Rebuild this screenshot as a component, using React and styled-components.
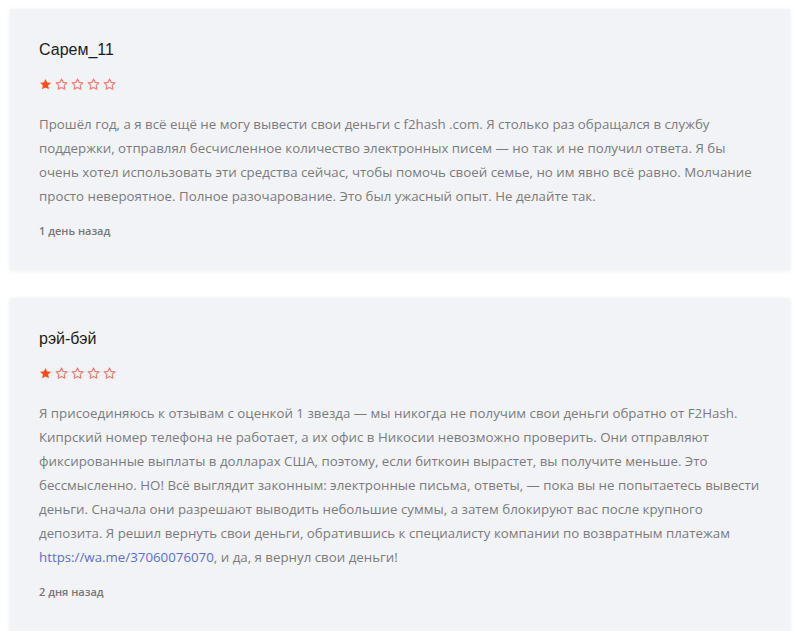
import styled, { createGlobalStyle } from 'styled-components';

const GlobalStyle = createGlobalStyle`
  html, body {
    margin: 0;
    padding: 0;
    background: #ffffff;
  }
  * { box-sizing: border-box; }
`;

const Page = styled.div`
  display: flex;
  flex-direction: column;
  gap: 28px;
  padding: 9px 5px 0 10px;
`;

const Card = styled.article`
  background: #f2f3f7;
  box-shadow: 0 1px 5px rgba(0, 0, 0, 0.07);
  padding: 30px 27px 31px 29px;
  display: flex;
  flex-direction: column;
`;

const Author = styled.h3`
  margin: 0;
  font-family: 'Liberation Sans', Arial, sans-serif;
  font-weight: 400;
  font-size: 16px;
  line-height: 22px;
  color: #1c1c1c;
`;

const Stars = styled.div`
  display: flex;
  gap: 3px;
  margin-top: 16px;
  height: 14px;
  align-items: center;
`;

const Body = styled.p`
  margin: 21px 0 0;
  font-family: 'Open Sans', sans-serif;
  font-size: 13.3px;
  line-height: 24px;
  color: #7b7b7b;
`;

const Link = styled.a`
  color: #5a6fd0;
  text-decoration: none;
`;

const When = styled.div`
  margin-top: 15px;
  font-family: 'Open Sans', sans-serif;
  font-size: 11px;
  font-weight: 600;
  line-height: 16px;
  color: #777777;
`;

function Star({ filled }) {
  const d =
    'M6.5 0.9l1.65 3.5 3.8.45-2.8 2.6.75 3.8L6.5 9.4l-3.4 1.85.75-3.8-2.8-2.6 3.8-.45z';
  return (
    <svg width="13" height="13" viewBox="0 0 13 13">
      {filled ? (
        <path d={d} fill="#ff4e1c" />
      ) : (
        <path d={d} fill="none" stroke="#f47a6c" strokeWidth="1.1" strokeLinejoin="round" />
      )}
    </svg>
  );
}

function Rating({ value }) {
  return (
    <Stars>
      {[1, 2, 3, 4, 5].map((i) => (
        <Star key={i} filled={i <= value} />
      ))}
    </Stars>
  );
}

export default function App() {
  return (
    <>
      <GlobalStyle />
      <Page>
        <Card>
          <Author>Сарем_11</Author>
          <Rating value={1} />
          <Body>
            Прошёл год, а я всё ещё не могу вывести свои деньги с f2hash .com. Я столько раз
            обращался в службу поддержки, отправлял бесчисленное количество электронных писем — но
            так и не получил ответа. Я бы очень хотел использовать эти средства сейчас, чтобы помочь
            своей семье, но им явно всё равно. Молчание просто невероятное. Полное разочарование.
            Это был ужасный опыт. Не делайте так.
          </Body>
          <When>1 день назад</When>
        </Card>
        <Card>
          <Author>рэй-бэй</Author>
          <Rating value={1} />
          <Body>
            Я присоединяюсь к отзывам с оценкой 1 звезда — мы никогда не получим свои деньги
            обратно от F2Hash. Кипрский номер телефона не работает, а их офис в Никосии невозможно
            проверить. Они отправляют фиксированные выплаты в долларах США, поэтому, если биткоин
            вырастет, вы получите меньше. Это бессмысленно. НО! Всё выглядит законным: электронные
            письма, ответы, — пока вы не попытаетесь вывести деньги. Сначала они разрешают выводить
            небольшие суммы, а затем блокируют вас после крупного депозита. Я решил вернуть свои
            деньги, обратившись к специалисту компании по возвратным платежам{' '}
            <Link href="#">https://wa.me/37060076070</Link>, и да, я вернул свои деньги!
          </Body>
          <When>2 дня назад</When>
        </Card>
      </Page>
    </>
  );
}
